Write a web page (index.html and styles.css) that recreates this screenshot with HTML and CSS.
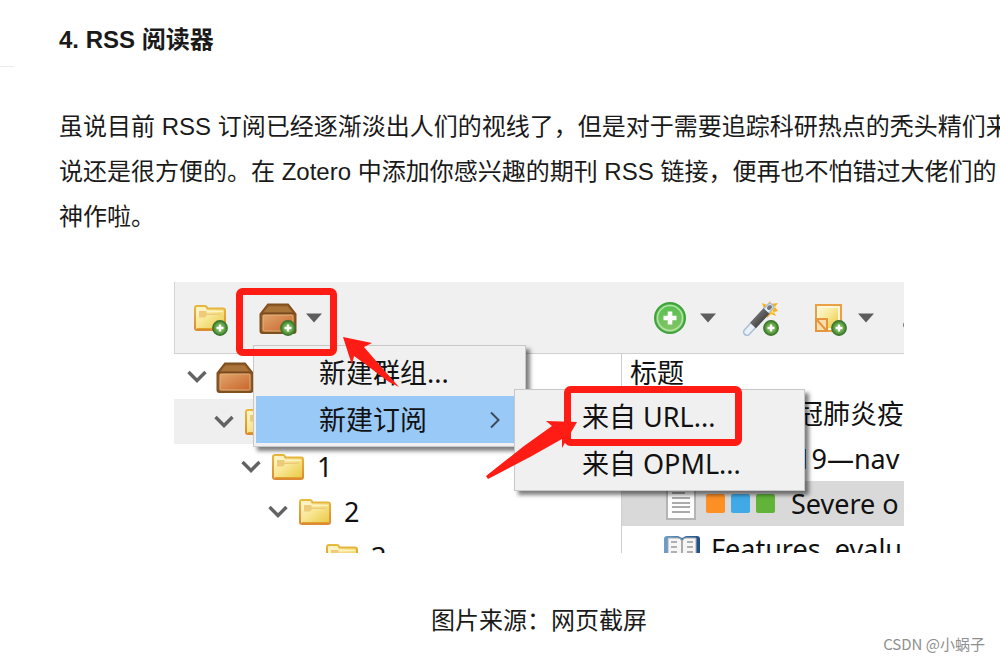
FILE: index.html
```
<!DOCTYPE html>
<html lang="zh-CN">
<head>
  <meta charset="UTF-8" />
  <meta name="viewport" content="width=device-width, initial-scale=1.0" />
  <title>RSS 阅读器</title>
  <link rel="stylesheet" href="styles.css">
</head>
<body>
  <!-- Shared icons -->
  <svg class="icon-defs" aria-hidden="true">
    <defs>
      <linearGradient id="gold" x1="0" y1="0" x2="1" y2="1">
        <stop offset="0" stop-color="#fdf6cf"/>
        <stop offset="0.45" stop-color="#f8e795"/>
        <stop offset="1" stop-color="#e9c73c"/>
      </linearGradient>
      <linearGradient id="gold-edge" x1="0" y1="0" x2="0" y2="1">
        <stop offset="0" stop-color="#e6b93c"/>
        <stop offset="1" stop-color="#dc8a35"/>
      </linearGradient>
      <linearGradient id="wood" x1="0" y1="0" x2="1" y2="1">
        <stop offset="0" stop-color="#e0a56c"/>
        <stop offset="1" stop-color="#c9652c"/>
      </linearGradient>
      <radialGradient id="leaf">
        <stop offset="0" stop-color="#8cc56c"/>
        <stop offset="0.6" stop-color="#67a84b"/>
        <stop offset="1" stop-color="#3c7a2c"/>
      </radialGradient>
      <linearGradient id="green" x1="0" y1="0" x2="0" y2="1">
        <stop offset="0" stop-color="#54c04e"/>
        <stop offset="1" stop-color="#86c466"/>
      </linearGradient>
      <linearGradient id="steel" x1="0" y1="0" x2="1" y2="1">
        <stop offset="0" stop-color="#858585"/>
        <stop offset="1" stop-color="#303030"/>
      </linearGradient>
      <linearGradient id="cover" x1="0" y1="0" x2="1" y2="0">
        <stop offset="0" stop-color="#6d9fcd"/>
        <stop offset="1" stop-color="#1f4f83"/>
      </linearGradient>
    </defs>
    <symbol id="badge" viewBox="0 0 16 16">
      <circle cx="8" cy="8" r="7.3" fill="url(#leaf)" stroke="#39752c" stroke-width="1.2"/>
      <path d="M8 4.500v7M4.500 8h7" stroke="#fff" stroke-width="2.4"/>
    </symbol>
    <symbol id="folder" viewBox="0 0 36 36">
      <path d="M3 8q0-2 2-2h8q1.500 0 2 1.500l.5 1h15.500q2 0 2 2V28q0 2-2 2H5q-2 0-2-2z" fill="url(#gold)" stroke="url(#gold-edge)" stroke-width="2"/>
      <path d="M5 8h8l2 3h16v1h-16l-2 4H5z" fill="#fcf3c4"/>
      <path d="M7 11h7.500v2.500H29v1.500H15l-2 2.500H7z" fill="#eecb78"/>
      <path d="M5 28.500h27" stroke="#e2a32e" stroke-width="1"/>
    </symbol>
    <symbol id="box" viewBox="0 0 38 36">
      <path d="M1.500 14L9 4.500h20L36.500 14v17q0 2-2 2h-31q-2 0-2-2z" fill="#98602b" stroke="#80501f" stroke-width="2"/>
      <path d="M9.500 6.500h19l4.500 5.500H5z" fill="#a97438"/>
      <path d="M3 13.500h32" stroke="#77491f" stroke-width="1.500"/>
      <rect x="4" y="15" width="30" height="16" rx="1" fill="url(#wood)" stroke="#e4af79" stroke-width="1"/>
    </symbol>
    <symbol id="caret" viewBox="0 0 18 10">
      <path d="M1 0.500h16L9 9.500z" fill="#5d5d5d"/>
    </symbol>
    <symbol id="chevron" viewBox="0 0 20 14">
      <path d="M1.500 2L10 10.500 18.500 2" fill="none" stroke="#636363" stroke-width="3.4"/>
    </symbol>
  </svg>

  <div class="side-line"></div>

  <article class="post">
    <h2>4. RSS 阅读器</h2>
    <p>虽说目前 RSS 订阅已经逐渐淡出人们的视线了，但是对于需要追踪科研热点的秃头精们来<br>说还是很方便的。在 Zotero 中添加你感兴趣的期刊 RSS 链接，便再也不怕错过大佬们的<br>神作啦。</p>

    <figure>
      <div class="window">
        <div class="toolbar">
          <div class="tools tools-left">
            <button class="tool" aria-label="新建分类">
              <svg width="36" height="36"><use href="#folder" width="36" height="36"/><use href="#badge" x="20" y="20" width="16" height="16"/></svg>
            </button>
            <button class="tool" aria-label="新建文库">
              <svg width="38" height="36"><use href="#box" width="38" height="36"/><use href="#badge" x="21" y="20" width="16" height="16"/></svg>
              <svg width="18" height="10"><use href="#caret"/></svg>
            </button>
          </div>
          <div class="tools tools-right">
            <button class="tool tool-add" aria-label="新建条目">
              <svg width="36" height="36" viewBox="0 0 36 36">
                <circle cx="18" cy="18" r="15" fill="url(#green)" stroke="#3ea23d" stroke-width="2"/>
                <circle cx="18" cy="18" r="12.500" fill="none" stroke="#b4e3a6" stroke-width="1.500"/>
                <path d="M18 11.500v13M11.500 18h13" stroke="#fff" stroke-width="4.600"/>
              </svg>
              <svg width="18" height="10"><use href="#caret"/></svg>
            </button>
            <button class="tool" aria-label="通过标识符添加">
              <svg width="38" height="36" viewBox="0 0 38 36">
                <path d="M20 3l5 2 3-4 1 3 7-1-3 4 3 4-4 1 2 4-5-2-4 4z" fill="#f9b020"/>
                <path d="M25 5l4 2 5-1-3 4 1 4-4-2-3 1z" fill="#ffe14a"/>
                <path d="M5 32L28 7" stroke="#a9bfd6" stroke-width="8" stroke-linecap="round"/>
                <path d="M5 32L28 7" stroke="#e9f1f7" stroke-width="5" stroke-linecap="round"/>
                <path d="M11 25.500L24.500 11" stroke="url(#steel)" stroke-width="8"/>
                <path d="M27 8l1-1" stroke="#777" stroke-width="4" stroke-linecap="round"/>
                <use href="#badge" x="21" y="20" width="16" height="16"/>
              </svg>
            </button>
            <button class="tool tool-note" aria-label="新建笔记">
              <svg width="36" height="36" viewBox="0 0 36 36">
                <rect x="3" y="5" width="25" height="26" fill="#fff8d8" stroke="#eca044" stroke-width="2"/>
                <rect x="6" y="8" width="19" height="20" fill="url(#gold)"/>
                <path d="M3 19h11v12H3z" fill="#f9dfae" stroke="#e7953c" stroke-width="2"/>
                <path d="M4 20l9 10" stroke="#e7953c" stroke-width="2"/>
                <use href="#badge" x="18" y="20" width="16" height="16"/>
              </svg>
              <svg width="18" height="10"><use href="#caret"/></svg>
            </button>
            <span class="tool-edge"></span>
          </div>
        </div>

        <div class="panes">
          <ul class="tree">
            <li class="level-0"><svg width="20" height="14"><use href="#chevron"/></svg><svg width="38" height="36"><use href="#box"/></svg></li>
            <li class="level-1 current"><svg width="20" height="14"><use href="#chevron"/></svg><svg width="36" height="36"><use href="#folder"/></svg></li>
            <li class="level-2"><svg width="20" height="14"><use href="#chevron"/></svg><svg width="36" height="36"><use href="#folder"/></svg><span>1</span></li>
            <li class="level-3"><svg width="20" height="14"><use href="#chevron"/></svg><svg width="36" height="36"><use href="#folder"/></svg><span>2</span></li>
            <li class="level-4"><svg width="36" height="36"><use href="#folder"/></svg><span>3</span></li>
          </ul>

          <table class="items">
            <thead>
              <tr><th>标题</th></tr>
            </thead>
            <tbody>
              <tr><td class="covered">冠肺炎疫情</td></tr>
              <tr><td class="covered">19—nav</td></tr>
              <tr class="selected">
                <td>
                  <div class="item">
                    <svg width="30" height="34" viewBox="0 0 30 34">
                      <path d="M1 1h28v31H1z" fill="#fdfdfd" stroke="#b4b4b4" stroke-width="2"/>
                      <path d="M6 6h13M6 11h18M6 16h18M6 20h18M6 25h18" stroke="#aaa" stroke-width="2"/>
                    </svg>
                    <span class="tags"><i class="tag orange"></i><i class="tag blue"></i><i class="tag green"></i></span>
                    <span>Severe o</span>
                  </div>
                </td>
              </tr>
              <tr>
                <td class="book">
                  <div class="item">
                    <svg width="38" height="30" viewBox="0 0 38 30">
                      <path d="M1 30V5q0-3 3-3h11l4 2 4-2h11q3 0 3 3v25z" fill="url(#cover)"/>
                      <path d="M5 30V4h10q3 0 3.500 3V30zM33 30V4H23q-3 0-3.500 3V30z" fill="#f6f6f6" stroke="#aaa"/>
                      <path d="M8 8h6M8 13h6M8 18h6M24 8h6M24 13h6M24 18h6" stroke="#b0b0b0" stroke-width="2"/>
                    </svg>
                    <span>Features, evalu</span>
                  </div>
                </td>
              </tr>
            </tbody>
          </table>
        </div>

        <div class="menu menu-new">
          <button class="menu-item">新建群组...</button>
          <button class="menu-item active">新建订阅
            <svg width="12" height="18" viewBox="0 0 12 18"><path d="M2 1.500L9.500 9 2 16.500" fill="none" stroke="#3c4c5c" stroke-width="2"/></svg>
          </button>
        </div>
        <div class="menu menu-feed">
          <button class="menu-item">来自 URL...</button>
          <button class="menu-item">来自 OPML...</button>
        </div>

        <!-- Red frames and arrows -->
        <svg class="marks" width="730" height="271" viewBox="0 0 730 271" aria-hidden="true">
          <g fill="none" stroke="#ff1c14" stroke-width="7">
            <rect x="65.500" y="9.500" width="94" height="61" rx="3"/>
            <rect x="393.500" y="107.500" width="171" height="53" rx="3"/>
          </g>
          <g fill="#ff1c14">
            <path d="M169 55l29 6-8 4 19 22 16 18-10-5-24-18-11-8-2 9z"/>
            <path d="M403 140l-31-1 6 5-28 20-38 30 2 3 42-22 32-18v9z"/>
          </g>
        </svg>
      </div>
      <figcaption>图片来源：网页截屏</figcaption>
    </figure>
  </article>

  <div class="watermark">CSDN @小蜗子</div>
</body>
</html>
```

FILE: styles.css
```
* {
  box-sizing: border-box;
}

body {
  margin: 0;
  min-height: 100vh;
  position: relative;
  overflow: hidden;
  background-color: #fff;
  color: #1a1a1a;
  font-family: "Liberation Sans", "Noto Sans CJK SC", sans-serif;
}

button {
  margin: 0;
  padding: 0;
  border: none;
  background: none;
  font: inherit;
  color: inherit;
  cursor: pointer;
}

svg {
  display: block;
  flex-shrink: 0;
}

.icon-defs {
  position: absolute;
  width: 0;
  height: 0;
}

.side-line {
  position: absolute;
  top: 66px;
  left: 0;
  width: 14px;
  height: 1px;
  background-color: #ebebeb;
}

/* Article */
.post {
  margin: 0 -19px 0 59px;
  padding-top: 17px;
  font-size: 24px;
  line-height: 45px;
}

.post h2 {
  margin: 0 0 42px;
  font-size: 24px;
  font-weight: 700;
}

.post p {
  margin: 0 0 43px;
  white-space: nowrap;
}

.post figure {
  margin: 0;
}

.post figcaption {
  margin-top: 45px;
  text-align: center;
}

/* Program window */
.window {
  position: relative;
  max-width: 730px;
  height: 271px;
  margin: 0 auto;
  overflow: hidden;
  background-color: #fff;
  color: #111;
  font-family: "Noto Sans", "Noto Sans CJK SC", sans-serif;
  font-size: 27px;
}

.toolbar {
  display: flex;
  height: 72px;
  background-color: #f0f0f0;
  border-bottom: 1px solid #cfcfcf;
  border-left: 1px solid #d4d4d4;
}

.tools {
  display: flex;
  align-items: center;
}

.tools-left {
  flex: 0 0 447px;
  gap: 31px;
  padding-left: 17px;
}

.tools-right {
  flex: 1;
  gap: 25px;
  padding-left: 30px;
}

.tool {
  display: flex;
  align-items: center;
  gap: 8px;
}

.tool-add {
  gap: 11px;
}

.tool-note {
  margin-left: 8px;
}

.tool-edge {
  width: 6px;
  height: 6px;
  margin: 14px 0 0 3px;
  border-radius: 3px;
  background-color: #777;
}

.panes {
  display: flex;
  align-items: flex-start;
}

.tree {
  flex: 0 0 448px;
  margin: 0;
  padding: 0;
  list-style: none;
  border-right: 1px solid #cfcfcf;
}

.tree li {
  display: flex;
  align-items: center;
  gap: 9px;
  height: 45px;
}

.tree span {
  padding-left: 2px;
}

.tree .current {
  background-color: #efefef;
}

.level-0 { padding-left: 13px; }
.level-1 { padding-left: 40px; }
.level-2 { padding-left: 67px; }
.level-3 { padding-left: 94px; }
.level-4 { padding-left: 150px; }

.items {
  flex: 1;
  border-collapse: collapse;
  line-height: 36px;
  white-space: nowrap;
}

.items th {
  height: 37px;
  padding: 0 0 0 8px;
  font-weight: 400;
  text-align: left;
}

.items td {
  height: 45px;
  padding: 0 0 0 44px;
}

.items .covered {
  padding-left: 174px;
}

.items .book {
  padding-left: 41px;
}

.items .selected {
  background-color: #d9d9d9;
}

.item {
  display: flex;
  align-items: center;
  gap: 10px;
  height: 45px;
}

.tags {
  display: flex;
  gap: 6px;
  margin-right: 6px;
}

.tag {
  width: 19px;
  height: 19px;
  border-radius: 2px;
}

.orange { background-color: #fd8f24; }
.blue { background-color: #41a9e6; }
.green { background-color: #61b33a; }

/* Menus */
.menu {
  position: absolute;
  padding: 3px 2px;
  background-color: #f0f0f0;
  border: 1px solid #c8c8c8;
  box-shadow: 4px 4px 4px rgba(0, 0, 0, 0.5);
}

.menu-new {
  top: 63px;
  left: 79px;
  width: 273px;
}

.menu-feed {
  top: 107px;
  left: 340px;
  width: 291px;
  padding: 3px 4px;
}

.menu-item {
  display: flex;
  align-items: center;
  justify-content: space-between;
  width: 100%;
  height: 47px;
  padding: 0 22px 0 63px;
  line-height: 46px;
  white-space: nowrap;
}

.menu-item.active {
  background-color: #99c9f7;
}

.marks {
  position: absolute;
  top: 0;
  left: 0;
  pointer-events: none;
}

.watermark {
  position: absolute;
  right: 15px;
  bottom: 5px;
  color: #8f8f8f;
  font-family: "Noto Sans CJK SC", sans-serif;
  font-size: 15px;
  line-height: 22px;
}
```
